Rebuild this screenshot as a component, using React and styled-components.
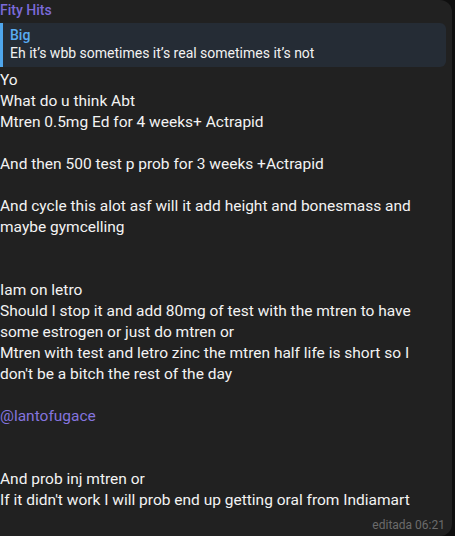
import React from "react";
import styled, { createGlobalStyle } from "styled-components";

const GlobalStyle = createGlobalStyle`
  html, body {
    margin: 0;
    padding: 0;
    background: #0f0f0f;
  }
  body {
    font-family: Roboto, "Open Sans", sans-serif;
    -webkit-font-smoothing: antialiased;
  }
`;

const Bubble = styled.div`
  width: 452px;
  height: 536px;
  box-sizing: border-box;
  background: #212121;
  border-radius: 0 12px 12px 0;
  padding: 1px 6px 0 0;
  display: flex;
  flex-direction: column;
  overflow: hidden;
`;

const Author = styled.div`
  color: #7b6ad9;
  font-weight: 500;
  font-size: 14px;
  line-height: 18px;
`;

const Reply = styled.div`
  margin-top: 4px;
  background: #252c35;
  border-left: 3px solid #4fa6ec;
  border-radius: 0 6px 6px 0;
  padding: 3px 8px 4px 7px;
`;

const ReplyName = styled.div`
  color: #59adf2;
  font-weight: 500;
  font-size: 14px;
  line-height: 18px;
`;

const ReplyText = styled.div`
  color: #f2f2f2;
  font-size: 14px;
  line-height: 19px;
`;

const Body = styled.div`
  margin-top: 3px;
  width: 440px;
  color: #f3f3f3;
  font-size: 15.5px;
  line-height: 21px;
  white-space: pre-wrap;
`;

const Mention = styled.span`
  color: #8474de;
`;

const Meta = styled.div`
  align-self: flex-end;
  margin-top: 6px;
  color: #6b6b6b;
  font-size: 12px;
  line-height: 16px;
  padding-right: 1px;
`;

export default function App() {
  return (
    <>
      <GlobalStyle />
      <Bubble>
        <Author>Fity Hits</Author>
        <Reply>
          <ReplyName>Big</ReplyName>
          <ReplyText>Eh it’s wbb sometimes it’s real sometimes it’s not</ReplyText>
        </Reply>
        <Body>
          {`Yo
What do u think Abt
Mtren 0.5mg Ed for 4 weeks+ Actrapid

And then 500 test p prob for 3 weeks +Actrapid

And cycle this alot asf will it add height and bonesmass and maybe gymcelling


Iam on letro
Should I stop it and add 80mg of test with the mtren to have some estrogen or just do mtren or
Mtren with test and letro zinc the mtren half life is short so I don't be a bitch the rest of the day

`}
          <Mention>@lantofugace</Mention>
          {`


And prob inj mtren or
If it didn't work I will prob end up getting oral from Indiamart`}
        </Body>
        <Meta>editada 06:21</Meta>
      </Bubble>
    </>
  );
}
